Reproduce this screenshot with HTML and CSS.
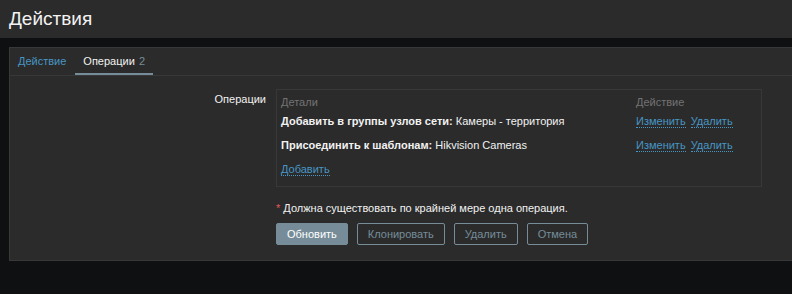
FILE: index.html
```html
<!DOCTYPE html>
<html lang="ru">
<head>
    <meta charset="UTF-8">
    <title>Действия</title>
    <link rel="stylesheet" href="styles.css">
</head>
<body>
    <header class="page-header">
        <h1>Действия</h1>
    </header>

    <main class="wrapper">
        <div class="tabs-box">
            <ul class="tabs">
                <li><a href="#">Действие</a></li>
                <li class="active"><a href="#">Операции</a> <span class="count">2</span></li>
            </ul>

            <div class="tab-body">
                <div class="form-row">
                    <label class="form-label">Операции</label>
                    <div class="form-field">
                        <div class="ops-box">
                            <table class="ops">
                                <thead>
                                    <tr>
                                        <th>Детали</th>
                                        <th class="col-action">Действие</th>
                                    </tr>
                                </thead>
                                <tbody>
                                    <tr>
                                        <td><b>Добавить в группы узлов сети:</b> Камеры - территория</td>
                                        <td><a class="link" href="#">Изменить</a><a class="link" href="#">Удалить</a></td>
                                    </tr>
                                    <tr>
                                        <td><b>Присоединить к шаблонам:</b> Hikvision Cameras</td>
                                        <td><a class="link" href="#">Изменить</a><a class="link" href="#">Удалить</a></td>
                                    </tr>
                                    <tr>
                                        <td colspan="2"><a class="link" href="#">Добавить</a></td>
                                    </tr>
                                </tbody>
                            </table>
                        </div>
                    </div>
                </div>

                <div class="form-row">
                    <div class="form-label"></div>
                    <div class="form-field">
                        <p class="note"><span class="req">*</span> Должна существовать по крайней мере одна операция.</p>
                        <div class="buttons">
                            <button class="btn primary">Обновить</button>
                            <button class="btn">Клонировать</button>
                            <button class="btn">Удалить</button>
                            <button class="btn">Отмена</button>
                        </div>
                    </div>
                </div>
            </div>
        </div>
    </main>
</body>
</html>
```

FILE: styles.css
```css
body {
    font-family: "Liberation Sans", Arial, sans-serif;
    font-size: 11px;
    margin: 0;
    padding: 0;
    background-color: #0e1012;
    color: #f2f2f2;
    height: 100vh;
    overflow: hidden;
}

.page-header {
    background-color: #2b2b2b;
    height: 38px;
    display: flex;
    align-items: center;
    padding-left: 9px;
}

.page-header h1 {
    margin: 0;
    font-size: 19px;
    font-weight: normal;
    color: #f2f2f2;
}

.wrapper {
    padding: 9px 0 0 9px;
}

.tabs-box {
    background-color: #2b2b2b;
    border: 1px solid #383838;
    border-right: none;
    height: 212px;
}

.tabs {
    list-style-type: none;
    margin: 0;
    padding: 0;
    display: flex;
    border-bottom: 1px solid #383838;
    height: 27px;
}

.tabs li {
    padding: 7px 8px 0;
    height: 18px;
}

.tabs li.active {
    border-bottom: 2px solid #768d99;
    margin-left: 1px;
}

.tabs a {
    color: #4796c4;
    text-decoration: none;
}

.tabs li.active a {
    color: #f2f2f2;
}

.count {
    color: #768d99;
    margin-left: 1px;
}

.tab-body {
    padding-top: 13px;
}

.form-row {
    display: flex;
}

.form-label {
    width: 256px;
    text-align: right;
    padding-top: 4px;
    padding-right: 10px;
    flex-shrink: 0;
}

.form-field {
    flex: 1;
}

.ops-box {
    width: 475px;
    height: 85px;
    border: 1px solid #383838;
    padding: 2px 5px 9px 4px;
}

.ops {
    border-collapse: collapse;
    width: 100%;
}

.ops th {
    text-align: left;
    font-weight: normal;
    color: #737373;
    padding: 4px 0 2px;
}

.ops td {
    padding: 5px 0 7px;
    white-space: nowrap;
}

.ops .col-action {
    width: 120px;
}

.ops b {
    font-weight: bold;
}

.link {
    color: #4796c4;
    text-decoration: none;
    border-bottom: 1px dotted #4796c4;
}

.link + .link {
    margin-left: 5px;
}

.note {
    margin: 15px 0 9px;
}

.req {
    color: #e45959;
}

.buttons {
    display: flex;
    gap: 9px;
}

.btn {
    font-family: "Liberation Sans", Arial, sans-serif;
    font-size: 11px;
    height: 22px;
    padding: 0 10px;
    background-color: transparent;
    border: 1px solid #768d99;
    border-radius: 2px;
    color: #768d99;
    cursor: pointer;
}

.btn.primary {
    background-color: #768d99;
    color: #ffffff;
}
```
